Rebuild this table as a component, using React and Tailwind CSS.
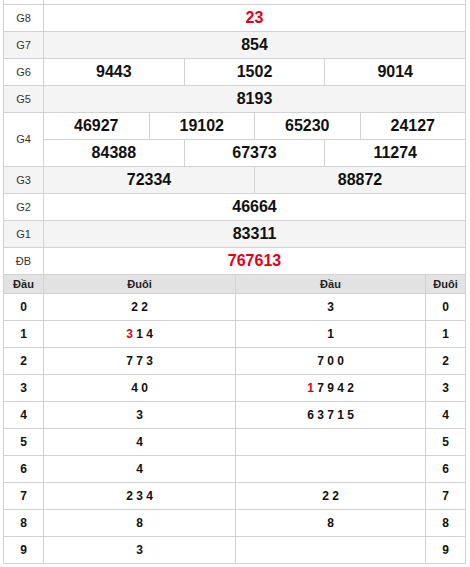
import React from "react";

const RED = "text-[#e1001a]";

function Label({ children }) {
  return (
    <div className="w-[40px] shrink-0 border-r border-[#d2d2d2] flex items-center justify-center text-[11px] text-[#333]">
      {children}
    </div>
  );
}

function Row({ label, bg, children, h = "h-[27px]" }) {
  return (
    <div className={`flex ${h} border-b border-[#d2d2d2] ${bg}`}>
      <Label>{label}</Label>
      <div className="flex-1 flex flex-col">{children}</div>
    </div>
  );
}

function Cells({ items, cls = "" }) {
  return (
    <div className={`flex-1 flex ${cls}`}>
      {items.map((t, i) => (
        <div
          key={i}
          className={`flex-1 flex items-center justify-center text-[16px] font-bold text-[#111] ${
            i > 0 ? "border-l border-[#d2d2d2]" : ""
          }`}
        >
          {t}
        </div>
      ))}
    </div>
  );
}

const loto = [
  ["0", "2 2", "3", "0"],
  ["1", <span><span className={RED}>3</span> 1 4</span>, "1", "1"],
  ["2", "7 7 3", "7 0 0", "2"],
  ["3", "4 0", <span><span className={RED}>1</span> 7 9 4 2</span>, "3"],
  ["4", "3", "6 3 7 1 5", "4"],
  ["5", "4", "", "5"],
  ["6", "4", "", "6"],
  ["7", "2 3 4", "2 2", "7"],
  ["8", "8", "8", "8"],
  ["9", "3", "", "9"],
];

export default function App() {
  return (
    <div
      className="w-[470px] h-[567px] bg-white overflow-hidden"
      style={{ fontFamily: '"Liberation Sans", Arial, sans-serif' }}
    >
      <div className="ml-[3px] w-[463px] border-l border-r border-[#d2d2d2]">
        <div className="flex h-[5px] border-b border-[#d2d2d2]">
          <div className="w-[40px] border-r border-[#d2d2d2]" />
        </div>
        <Row label="G8" bg="bg-white">
          <Cells items={[<span className={RED}>23</span>]} />
        </Row>
        <Row label="G7" bg="bg-[#f4f4f4]">
          <Cells items={["854"]} />
        </Row>
        <Row label="G6" bg="bg-white">
          <Cells items={["9443", "1502", "9014"]} />
        </Row>
        <Row label="G5" bg="bg-[#f4f4f4]">
          <Cells items={["8193"]} />
        </Row>
        <Row label="G4" bg="bg-white" h="h-[54px]">
          <Cells items={["46927", "19102", "65230", "24127"]} cls="border-b border-[#d2d2d2]" />
          <Cells items={["84388", "67373", "11274"]} />
        </Row>
        <Row label="G3" bg="bg-[#f4f4f4]">
          <Cells items={["72334", "88872"]} />
        </Row>
        <Row label="G2" bg="bg-white">
          <Cells items={["46664"]} />
        </Row>
        <Row label="G1" bg="bg-[#f4f4f4]">
          <Cells items={["83311"]} />
        </Row>
        <Row label="ĐB" bg="bg-white">
          <Cells items={[<span className={RED}>767613</span>]} />
        </Row>

        <div className="flex h-[19px] border-b border-[#d2d2d2] bg-[#e2e2e2] text-[11px] font-bold text-[#222]">
          <div className="w-[40px] flex items-center justify-center border-r border-[#d2d2d2]">Đầu</div>
          <div className="w-[192px] flex items-center justify-center border-r border-[#d2d2d2]">Đuôi</div>
          <div className="w-[190px] flex items-center justify-center border-r border-[#d2d2d2]">Đầu</div>
          <div className="flex-1 flex items-center justify-center">Đuôi</div>
        </div>
        {loto.map((r, i) => (
          <div key={i} className="flex h-[27px] border-b border-[#d2d2d2] text-[12px] font-bold text-[#111]">
            <div className="w-[40px] flex items-center justify-center border-r border-[#d2d2d2]">{r[0]}</div>
            <div className="w-[192px] flex items-center justify-center border-r border-[#d2d2d2]">{r[1]}</div>
            <div className="w-[190px] flex items-center justify-center border-r border-[#d2d2d2]">{r[2]}</div>
            <div className="flex-1 flex items-center justify-center">{r[3]}</div>
          </div>
        ))}
      </div>
    </div>
  );
}
